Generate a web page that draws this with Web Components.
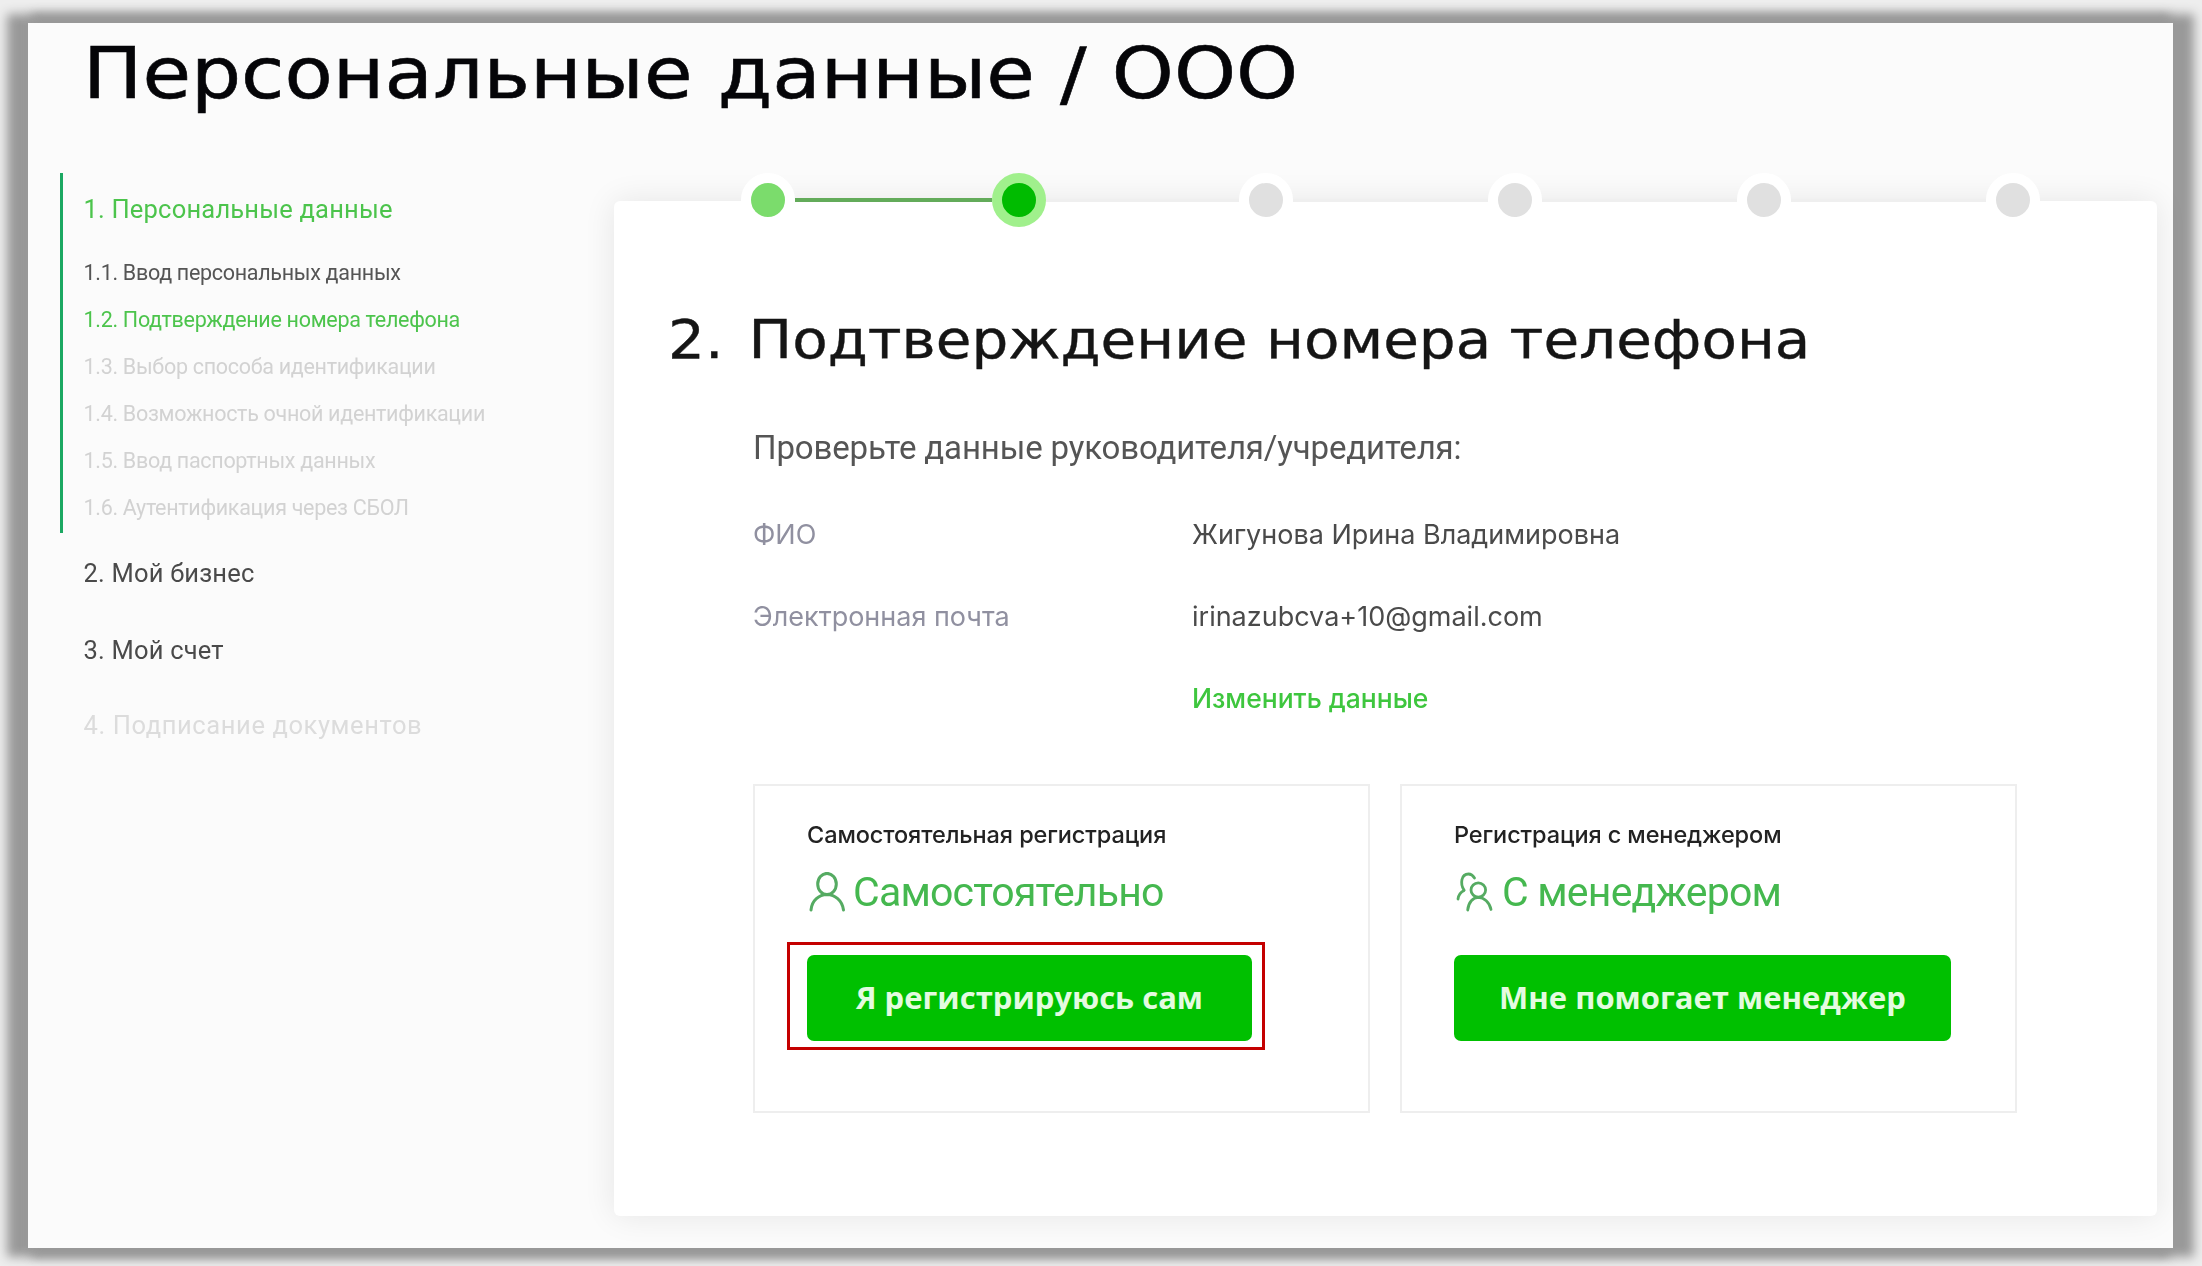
<!DOCTYPE html>
<html lang="ru">
<head>
<meta charset="utf-8">
<title>Персональные данные / ООО</title>
<style>
  html, body { margin: 0; height: 100%; background: #eeeeee; overflow: hidden; }
  body { font-family: Inter, "Liberation Sans", sans-serif; }
</style>
</head>
<body>
<app-frame>
  <span slot="title">Персональные данные / ООО</span>
  <side-nav slot="nav">
    <nav-group>
      <nav-item state="active" slot="head">1. Персональные данные</nav-item>
      <nav-item level="sub">1.1. Ввод персональных данных</nav-item>
      <nav-item level="sub" state="active">1.2. Подтверждение номера телефона</nav-item>
      <nav-item level="sub" state="off">1.3. Выбор способа идентификации</nav-item>
      <nav-item level="sub" state="off">1.4. Возможность очной идентификации</nav-item>
      <nav-item level="sub" state="off">1.5. Ввод паспортных данных</nav-item>
      <nav-item level="sub" state="off">1.6. Аутентификация через СБОЛ</nav-item>
    </nav-group>
    <nav-item gap="23">2. Мой бизнес</nav-item>
    <nav-item gap="43">3. Мой счет</nav-item>
    <nav-item gap="41" state="off">4. Подписание документов</nav-item>
  </side-nav>
  <form-card slot="main">
    <step-bar current="2" total="6"></step-bar>
    <span slot="heading">2.</span>
    <span slot="heading-text">Подтверждение номера телефона</span>
    <span slot="note">Проверьте данные руководителя/учредителя:</span>
    <info-row label="ФИО">Жигунова Ирина Владимировна</info-row>
    <info-row label="Электронная почта">irinazubcva+10@gmail.com</info-row>
    <info-row><a-link>Изменить данные</a-link></info-row>
    <reg-option slot="options" label="Самостоятельная регистрация" big="Самостоятельно" icon="one" action="Я регистрируюсь сам" btn-width="445" marked></reg-option>
    <reg-option slot="options" label="Регистрация с менеджером" big="С менеджером" icon="two" action="Мне помогает менеджер" btn-width="497"></reg-option>
  </form-card>
</app-frame>

<script>
class AppFrame extends HTMLElement {
  constructor() {
    super();
    this.attachShadow({ mode: "open" });
  }
  connectedCallback() {
    this.shadowRoot.innerHTML = `
      <style>
        :host {
          display: block;
          box-sizing: border-box;
          width: 2145px;
          height: 1225px;
          margin: 23px 0 0 28px;
          padding: 6px 16px 0 32px;
          background: #fbfbfb;
          box-shadow: 12px 0 10px 9px #999, -12px 0 10px 9px #999;
          filter: blur(0.5px);
        }
        h1 {
          width: max-content;
          margin: 0 0 56px 23px;
          font: 400 72px/88px "DejaVu Sans", "Liberation Sans", sans-serif;
          -webkit-text-stroke: 0.6px #050508;
          color: #050508;
          white-space: nowrap;
          transform: scaleX(1.097);
          transform-origin: left center;
        }
        .row { display: flex; align-items: flex-start; }
        .nav { flex: 0 0 554px; }
      </style>
      <h1><slot name="title"></slot></h1>
      <div class="row">
        <div class="nav"><slot name="nav"></slot></div>
        <slot name="main"></slot>
      </div>
    `;
  }
}

class SideNav extends HTMLElement {
  constructor() {
    super();
    this.attachShadow({ mode: "open" });
  }
  connectedCallback() {
    this.shadowRoot.innerHTML = `
      <style>
        :host { display: block; }
      </style>
      <slot></slot>
    `;
  }
}

class NavGroup extends HTMLElement {
  constructor() {
    super();
    this.attachShadow({ mode: "open" });
  }
  connectedCallback() {
    this.shadowRoot.innerHTML = `
      <style>
        :host {
          display: block;
          padding: 19px 0 10px 20.5px;
          border-left: 3px solid #1ba862;
        }
        .subs { display: flex; flex-direction: column; gap: 17px; margin-top: 32px; }
      </style>
      <slot name="head"></slot>
      <div class="subs"><slot></slot></div>
    `;
  }
}

class NavItem extends HTMLElement {
  constructor() {
    super();
    this.attachShadow({ mode: "open" });
  }
  connectedCallback() {
    const level = this.getAttribute("level");
    const state = this.getAttribute("state");
    const gap = this.getAttribute("gap");

    let color = "#4a4a4a";
    if (state == "active") {
      color = "#4cc44c";
    } else if (state == "off") {
      color = level == "sub" ? "#d2d2d2" : "#dcdcdc";
    } else if (level == "sub") {
      color = "#555";
    }

    const is_sub = level == "sub";
    let spacing = is_sub ? -0.3 : 0.2;
    if (!is_sub && state == "off") spacing = 0.6;

    this.shadowRoot.innerHTML = `
      <style>
        :host {
          display: block;
          margin-top: ${gap ? gap : 0}px;
          padding-left: ${gap ? 23.5 : 0}px;
          color: ${color};
          font-family: Roboto, "Liberation Sans", sans-serif;
          font-size: ${is_sub ? 21.5 : 25.5}px;
          line-height: ${is_sub ? 30 : 34}px;
          letter-spacing: ${spacing}px;
          white-space: nowrap;
        }
      </style>
      <slot></slot>
    `;
  }
}

class FormCard extends HTMLElement {
  constructor() {
    super();
    this.attachShadow({ mode: "open" });
  }
  connectedCallback() {
    this.shadowRoot.innerHTML = `
      <style>
        :host {
          display: block;
          box-sizing: border-box;
          width: 1543px;
          height: 1015px;
          margin-top: 28px;
          background: #fff;
          border-radius: 6px;
          box-shadow: 0 0 32px rgba(0, 0, 0, .09);
        }
        .bar { margin-top: -28px; }
        h2 {
          display: flex;
          gap: 23.5px;
          width: max-content;
          margin: 83px 0 0 54px;
          font: 400 54px/60px "DejaVu Sans", "Liberation Sans", sans-serif;
          -webkit-text-stroke: 0.4px #151515;
          color: #151515;
          white-space: nowrap;
          transform: scaleX(1.074);
          transform-origin: left center;
        }
        .body { margin-left: 139px; }
        .note {
          margin-top: 58px;
          font: 400 33px/40px Roboto, "Liberation Sans", sans-serif;
          letter-spacing: -0.15px;
          color: #555;
        }
        .rows { display: flex; flex-direction: column; gap: 41.5px; margin-top: 47px; }
        .options { display: flex; gap: 30px; margin-top: 65px; }
      </style>
      <div class="bar"><slot></slot></div>
      <h2><slot name="heading"></slot><span><slot name="heading-text"></slot></span></h2>
      <div class="body">
        <div class="note"><slot name="note"></slot></div>
        <div class="rows" id="rows"></div>
        <div class="options"><slot name="options"></slot></div>
      </div>
    `;
    // the rows are the plain children, the step bar stays in the default slot
    const rows_slot = document.createElement("slot");
    rows_slot.name = "rows";
    this.shadowRoot.getElementById("rows").appendChild(rows_slot);
    this.querySelectorAll("info-row").forEach((row) => row.setAttribute("slot", "rows"));
  }
}

class StepBar extends HTMLElement {
  constructor() {
    super();
    this.attachShadow({ mode: "open" });
  }
  connectedCallback() {
    const current = parseInt(this.getAttribute("current"));
    const total = parseInt(this.getAttribute("total"));
    let parts = "";
    for (let i = 1; i <= total; i++) {
      let type = "todo";
      if (i < current) type = "done";
      if (i == current) type = "now";
      parts += `<div class="dot ${type}"></div>`;
      if (i < total) parts += `<div class="line ${i < current ? "on" : ""}"></div>`;
    }
    this.shadowRoot.innerHTML = `
      <style>
        :host {
          display: flex;
          align-items: center;
          box-sizing: border-box;
          width: 1426px;
          height: 54px;
          padding-left: 127px;
        }
        .dot {
          flex: none;
          box-sizing: border-box;
          width: 54px;
          height: 54px;
          border-radius: 50%;
          background: #e0e0e0;
          border: 10px solid #fff;
        }
        .dot.done { background: #7bdc6c; }
        .dot.now { background: #00bb00; border-color: #a0f08c; }
        .line { flex: 1; height: 3px; background: #efefef; }
        .line.on { flex: 0 0 197px; height: 4px; background: #63ab5a; }
        .dot.now + .line { flex: 0 0 193px; }
      </style>
      ${parts}
    `;
  }
}

class InfoRow extends HTMLElement {
  constructor() {
    super();
    this.attachShadow({ mode: "open" });
  }
  connectedCallback() {
    const label = this.getAttribute("label") || "";
    this.shadowRoot.innerHTML = `
      <style>
        :host {
          display: grid;
          grid-template-columns: 439px 1fr;
          font: 400 27px/40px Inter, "Liberation Sans", sans-serif;
          color: #4a4a4a;
          white-space: nowrap;
        }
        .label { color: #9090a0; }
      </style>
      <div class="label">${label}</div>
      <div><slot></slot></div>
    `;
  }
}

class ALink extends HTMLElement {
  constructor() {
    super();
    this.attachShadow({ mode: "open" });
  }
  connectedCallback() {
    this.shadowRoot.innerHTML = `
      <style>
        :host { display: inline; color: #3ec63e; font-weight: 500; font-size: 26.5px; }
      </style>
      <slot></slot>
    `;
  }
}

class RegOption extends HTMLElement {
  constructor() {
    super();
    this.attachShadow({ mode: "open" });
  }
  connectedCallback() {
    const label = this.getAttribute("label");
    const big = this.getAttribute("big");
    const action = this.getAttribute("action");
    const btn_width = this.getAttribute("btn-width");
    const marked = this.hasAttribute("marked");

    const one = `<svg width="38" height="40" viewBox="0 0 38 40" fill="none" stroke="#55ab62" stroke-width="3" stroke-linecap="round">
        <ellipse cx="18" cy="12" rx="9.3" ry="10.6"/>
        <path d="M2 38 C3 28 10 23 18 22.6 C26 23 33 28 34.5 38"/>
      </svg>`;
    const two = `<svg width="40" height="40" viewBox="0 0 40 40" fill="none" stroke="#55ab62" stroke-width="2.8" stroke-linecap="round">
        <path d="M8 18 C4 12 5 2 12.5 2 C15 2 17 3.5 18.5 6"/>
        <path d="M2 27 C2.5 23 5 20 8 18.5"/>
        <ellipse cx="22.3" cy="18" rx="7.3" ry="7.2"/>
        <path d="M11.7 38 C12.5 30 17 25.6 22.3 25.3 C28 25.6 33.5 30 35 37.5"/>
      </svg>`;

    this.shadowRoot.innerHTML = `
      <style>
        :host {
          display: block;
          box-sizing: border-box;
          width: 617px;
          height: 329px;
          padding: 34px 0 0 52px;
          border: 2px solid #eeeeee;
        }
        .label {
          font: 500 23.5px/30px Inter, "Liberation Sans", sans-serif;
          letter-spacing: -0.1px;
          color: #222;
          white-space: nowrap;
        }
        .big {
          display: flex;
          align-items: center;
          gap: 6px;
          height: 46px;
          margin: 19px 0 40px 2px;
          font: 400 41px/46px Roboto, "Liberation Sans", sans-serif;
          letter-spacing: -0.8px;
          color: #45b84f;
          white-space: nowrap;
        }
        .wrap { position: relative; width: ${btn_width}px; }
        .btn {
          display: flex;
          align-items: center;
          justify-content: center;
          height: 86px;
          box-sizing: border-box;
          padding-bottom: 2px;
          border-radius: 7px;
          background: #00c000;
          color: #e4fbe0;
          font: 700 31px/40px "Open Sans", "Liberation Sans", sans-serif;
          white-space: nowrap;
        }
        /* red marker lying over the option */
        .mark {
          position: absolute;
          left: -20px;
          right: -13px;
          top: -13px;
          bottom: -9px;
          border: 3px solid #c40000;
        }
      </style>
      <div class="label">${label}</div>
      <div class="big">${this.getAttribute("icon") == "two" ? two : one}<span>${big}</span></div>
      <div class="wrap">
        <div class="btn">${action}</div>
        ${marked ? `<div class="mark"></div>` : ""}
      </div>
    `;
  }
}

customElements.define("app-frame", AppFrame);
customElements.define("side-nav", SideNav);
customElements.define("nav-group", NavGroup);
customElements.define("nav-item", NavItem);
customElements.define("form-card", FormCard);
customElements.define("step-bar", StepBar);
customElements.define("info-row", InfoRow);
customElements.define("a-link", ALink);
customElements.define("reg-option", RegOption);
</script>
</body>
</html>
